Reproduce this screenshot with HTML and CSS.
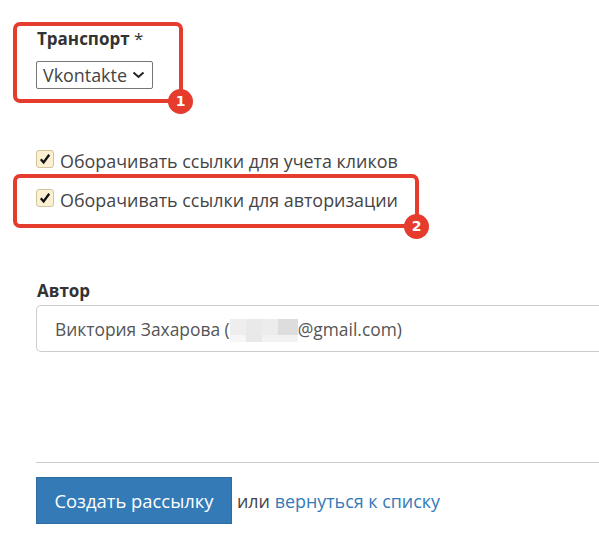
FILE: index.html
```html
<!DOCTYPE html>
<html lang="en">
<head>
    <meta charset="UTF-8">
    <meta name="viewport" content="width=device-width, initial-scale=1.0">
    <title>Создать рассылку</title>
    <link rel="stylesheet" href="styles.css">
</head>
<body>

    <form class="form">
        <div class="field field-transport">
            <label class="field-label">Транспорт <span class="required">*</span></label>
            <div class="select">
                <span>Vkontakte</span>
                <svg class="select-arrow" width="13" height="8" viewBox="0 0 13 8"><path d="M1.5 1.5 L6.5 6 L11.5 1.5" fill="none" stroke="#222" stroke-width="2"/></svg>
            </div>
        </div>

        <div class="checks">
            <label class="check">
                <span class="check-box"><svg width="12" height="12" viewBox="0 0 12 12"><path d="M1.8 6.2 L4.6 9.4 L10.2 1.8" fill="none" stroke="#111" stroke-width="2.3"/></svg></span>
                Оборачивать ссылки для учета кликов
            </label>
            <label class="check">
                <span class="check-box"><svg width="12" height="12" viewBox="0 0 12 12"><path d="M1.8 6.2 L4.6 9.4 L10.2 1.8" fill="none" stroke="#111" stroke-width="2.3"/></svg></span>
                Оборачивать ссылки для авторизации
            </label>
        </div>

        <div class="field field-author">
            <label class="field-label">Автор</label>
            <div class="input">Виктория Захарова (<span class="blur"></span>@gmail.com)</div>
        </div>

        <div class="actions">
            <button type="button" class="btn">Создать рассылку</button>
            <span class="actions-text">или <a href="#">вернуться к списку</a></span>
        </div>
    </form>

    <div class="mark mark-one"><span class="mark-num">1</span></div>
    <div class="mark mark-two"><span class="mark-num">2</span></div>

</body>
</html>
```

FILE: styles.css
```css
html, body {
    margin: 0;
    height: 560px;
    overflow: hidden;
}

body {
    position: relative;
    background-color: white;
    font-family: "Open Sans", Arial, sans-serif;
    font-size: 17.9px;
    color: #444;
}

.form {
    width: 563px;
    padding: 28px 0 0 36px;
}

.field-label {
    display: block;
    padding-left: 1px;
    font-weight: 700;
    font-size: 17px;
    line-height: 22px;
    color: #333;
}

.required {
    font-weight: 400;
}

.select {
    display: inline-flex;
    align-items: center;
    gap: 5px;
    width: 117px;
    height: 28px;
    box-sizing: border-box;
    margin-top: 11px;
    padding: 0 6px;
    border: 1px solid #767676;
    border-radius: 2px;
    color: #444;
}

.checks {
    display: flex;
    flex-direction: column;
    gap: 17px;
    margin-top: 61px;
}

.check {
    display: flex;
    align-items: center;
    gap: 6px;
    height: 22px;
}

.check-box {
    display: flex;
    align-items: center;
    justify-content: center;
    width: 16px;
    height: 16px;
    margin-top: -5px;
    background-color: #fbf0d2;
    border: 1px solid #d3c49d;
    border-radius: 3px;
}

.field-author {
    margin-top: 69px;
}

.input {
    height: 47px;
    box-sizing: border-box;
    margin-top: 3px;
    padding-left: 18px;
    border: 1px solid #ccc;
    border-radius: 5px 0 0 5px;
    border-right: none;
    line-height: 47px;
    font-size: 17.4px;
    color: #555;
    white-space: nowrap;
}

/* smudged-out part of the address */
.blur {
    display: inline-block;
    width: 68px;
    height: 23px;
    vertical-align: -6px;
    background-color: #f4f4f4;
    background-image:
        linear-gradient(90deg, #eeeeee 0 16px, #e9e9e9 16px 32px, #ececec 32px 48px, #dddddd 48px),
        linear-gradient(90deg, #f6f6f6 0 16px, #e8e8e8 16px 32px, #f2f2f2 32px);
    background-repeat: no-repeat;
    background-size: 100% 16px, 100% 7px;
    background-position: 0 0, 0 100%;
}

.actions {
    display: flex;
    align-items: center;
    gap: 5px;
    margin-top: 110px;
    padding-top: 14px;
    border-top: 1px solid #ccc;
}

.btn {
    width: 196px;
    height: 47px;
    padding: 0;
    font-family: inherit;
    font-size: 18.4px;
    color: white;
    background-color: #337ab7;
    border: 1px solid #2e6da4;
}

.actions-text a {
    color: #337ab7;
    text-decoration: none;
}

/* red annotation frames laid over the form */
.mark {
    position: absolute;
    box-sizing: border-box;
    border: 4px solid #e53c2e;
    border-radius: 7px;
}

.mark-one {
    left: 13px;
    top: 22px;
    width: 170px;
    height: 81px;
}

.mark-two {
    left: 13px;
    top: 174px;
    width: 406px;
    height: 54px;
}

.mark-num {
    position: absolute;
    right: -14px;
    bottom: -15px;
    width: 25px;
    height: 25px;
    border-radius: 50%;
    background-color: #e53c2e;
    color: white;
    font-family: "DejaVu Sans", sans-serif;
    font-size: 14px;
    font-weight: 700;
    line-height: 25px;
    text-align: center;
}
```
